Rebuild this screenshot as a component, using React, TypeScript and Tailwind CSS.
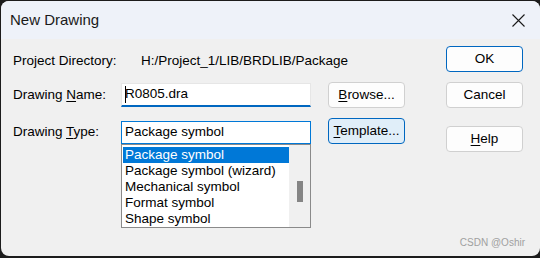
import React from "react";

const F = { fontFamily: '"Liberation Sans", Arial, sans-serif' };

function Btn({
  children,
  variant = "normal",
  className = "",
}: {
  children: React.ReactNode;
  variant?: "normal" | "default" | "focus";
  className?: string;
}) {
  const v =
    variant === "default"
      ? "border-[#0067c0] bg-[#fdfdfd]"
      : variant === "focus"
      ? "border-[#0067c0] bg-[#e0eef9]"
      : "border-[#d0d0d0] bg-[#fdfdfd]";
  return (
    <div
      className={`flex h-[26px] w-[77px] items-center justify-center rounded-[4px] border text-[13.5px] text-black ${v} ${className}`}
    >
      {children}
    </div>
  );
}

export default function App() {
  const items = [
    "Package symbol",
    "Package symbol (wizard)",
    "Mechanical symbol",
    "Format symbol",
    "Shape symbol",
  ];
  return (
    <div className="h-[258px] w-[540px] overflow-hidden bg-[#1c1c1c] pl-[1px] pt-[1px]" style={F}>
      <div className="flex h-[255px] w-[539px] flex-col overflow-hidden rounded-[8px] bg-[#f0f0f0]">
        <div className="flex h-[38px] shrink-0 items-center justify-between bg-[#eef2f9] pl-[9px] pr-[15px]">
          <span className="text-[15px] text-[#1a1a1a]">New Drawing</span>
          <svg width="13" height="13" viewBox="0 0 13 13">
            <path d="M0.5 0.5 L12.5 12.5 M12.5 0.5 L0.5 12.5" stroke="#1a1a1a" strokeWidth="1.1" />
          </svg>
        </div>
        <div className="relative flex flex-1 flex-row text-[13.5px] text-black">
          <div className="flex flex-col pl-[12px]">
            <div className="mt-[12px] flex h-[20px] items-center">
              <span className="w-[128px]">Project Directory:</span>
              <span>H:/Project_1/LIB/BRDLIB/Package</span>
            </div>
            <div className="mt-[11px] flex h-[26px] items-start">
              <span className="mt-[4px] w-[108px] leading-[18px]">
                Drawing <u className="underline-offset-2">N</u>ame:
              </span>
              <div className="mt-[1px] flex h-[24px] w-[190px] items-center border border-b-2 border-[#e6e6e6] border-b-[#0067c0] bg-white pl-[3px]">
                <span className="mr-[-1px] h-[17px] w-[1px] bg-black" />
                <span>R0805.dra</span>
              </div>
              <Btn className="ml-[17px]">
                <span>
                  <u className="underline-offset-2">B</u>rowse...
                </span>
              </Btn>
            </div>
            <div className="mt-[10px] flex h-[26px] items-start">
              <span className="mt-[5px] w-[108px] leading-[18px]">
                Drawing <u className="underline-offset-2">T</u>ype:
              </span>
              <div className="relative mt-[3px] w-[190px]">
                <div className="flex h-[23px] items-center border border-[#0078d7] bg-white pl-[3px]">
                  Package symbol
                </div>
                <div className="absolute left-0 top-full z-10 flex h-[84px] w-[190px] border border-[#8a8a8a] bg-white">
                  <div className="flex w-[167px] flex-col pl-[1px] pt-[2px]">
                    {items.map((t, i) => (
                      <div
                        key={t}
                        className={`h-[16px] pl-[2px] text-[13.5px] leading-[16px] ${
                          i === 0 ? "bg-[#0078d7] text-white" : "text-black"
                        }`}
                      >
                        {t}
                      </div>
                    ))}
                  </div>
                  <div className="flex flex-1 flex-col items-center bg-[#f0f0f0] pt-[36px]">
                    <div className="h-[21px] w-[6px] bg-[#858585]" />
                  </div>
                </div>
              </div>
              <Btn variant="focus" className="ml-[17px]">
                <span>
                  <u className="underline-offset-2">T</u>emplate...
                </span>
              </Btn>
            </div>
          </div>
          <div className="ml-[41px] flex flex-col">
            <Btn variant="default" className="mt-[7px]">
              OK
            </Btn>
            <Btn className="mt-[10px]">Cancel</Btn>
            <Btn className="mt-[18px]">
              <span>
                <u className="underline-offset-2">H</u>elp
              </span>
            </Btn>
          </div>
          <span className="absolute bottom-[6px] right-[15px] text-[10px] text-[#a0a0a0]">
            CSDN @Oshir
          </span>
        </div>
      </div>
    </div>
  );
}
